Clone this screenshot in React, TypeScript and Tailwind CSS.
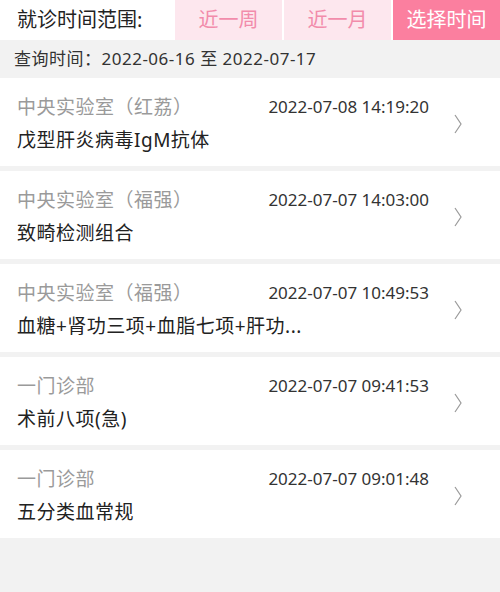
const records = [
  { dept: '中央实验室（红荔）', time: '2022-07-08 14:19:20', title: '戊型肝炎病毒IgM抗体' },
  { dept: '中央实验室（福强）', time: '2022-07-07 14:03:00', title: '致畸检测组合' },
  { dept: '中央实验室（福强）', time: '2022-07-07 10:49:53', title: '血糖+肾功三项+血脂七项+肝功...' },
  { dept: '一门诊部', time: '2022-07-07 09:41:53', title: '术前八项(急)' },
  { dept: '一门诊部', time: '2022-07-07 09:01:48', title: '五分类血常规' },
]

function Chevron() {
  return (
    <svg width="10" height="20" viewBox="0 0 10 20" fill="none" stroke="#9a9a9a" strokeWidth="1.2">
      <polyline points="2,1 8,10 2,19" />
    </svg>
  )
}

export default function App() {
  return (
    <div
      className="w-[500px] h-[592px] bg-[#f2f2f2] overflow-hidden"
      style={{ fontFamily: '"Noto Sans", "Noto Sans CJK SC", sans-serif' }}
    >
      <div className="flex h-10 bg-white">
        <div className="w-[175px] pl-[17px] flex items-center text-[20px] text-[#222]">就诊时间范围:</div>
        <div className="flex-1 flex gap-[2px]">
          <div className="flex-1 bg-[#fde7ee] text-[#f28cab] text-[20px] flex items-center justify-center">近一周</div>
          <div className="flex-1 bg-[#fde7ee] text-[#f28cab] text-[20px] flex items-center justify-center">近一月</div>
          <div className="flex-1 bg-[#fb7f9f] text-white text-[20px] flex items-center justify-center">选择时间</div>
        </div>
      </div>
      <div className="h-[38px] pl-[14px] flex items-center text-[17px] tracking-[0.5px] text-[#333]">
        查询时间：2022-06-16 至 2022-07-17
      </div>
      <div className="flex flex-col gap-[5px]">
        {records.map((r, i) => (
          <div key={i} className="h-[88px] bg-white flex items-center pl-[17px] pr-[37px] pt-[3px]">
            <div className="flex-1 flex flex-col gap-[9px]">
              <div className="flex items-center justify-between">
                <span className="text-[19px] tracking-[0.5px] text-[#9a9a9a] leading-6">{r.dept}</span>
                <span className="text-[17px] text-[#333] leading-6 mr-[24px]">{r.time}</span>
              </div>
              <div className="text-[19px] tracking-[0.5px] text-[#222] leading-6">{r.title}</div>
            </div>
            <Chevron />
          </div>
        ))}
      </div>
    </div>
  )
}
